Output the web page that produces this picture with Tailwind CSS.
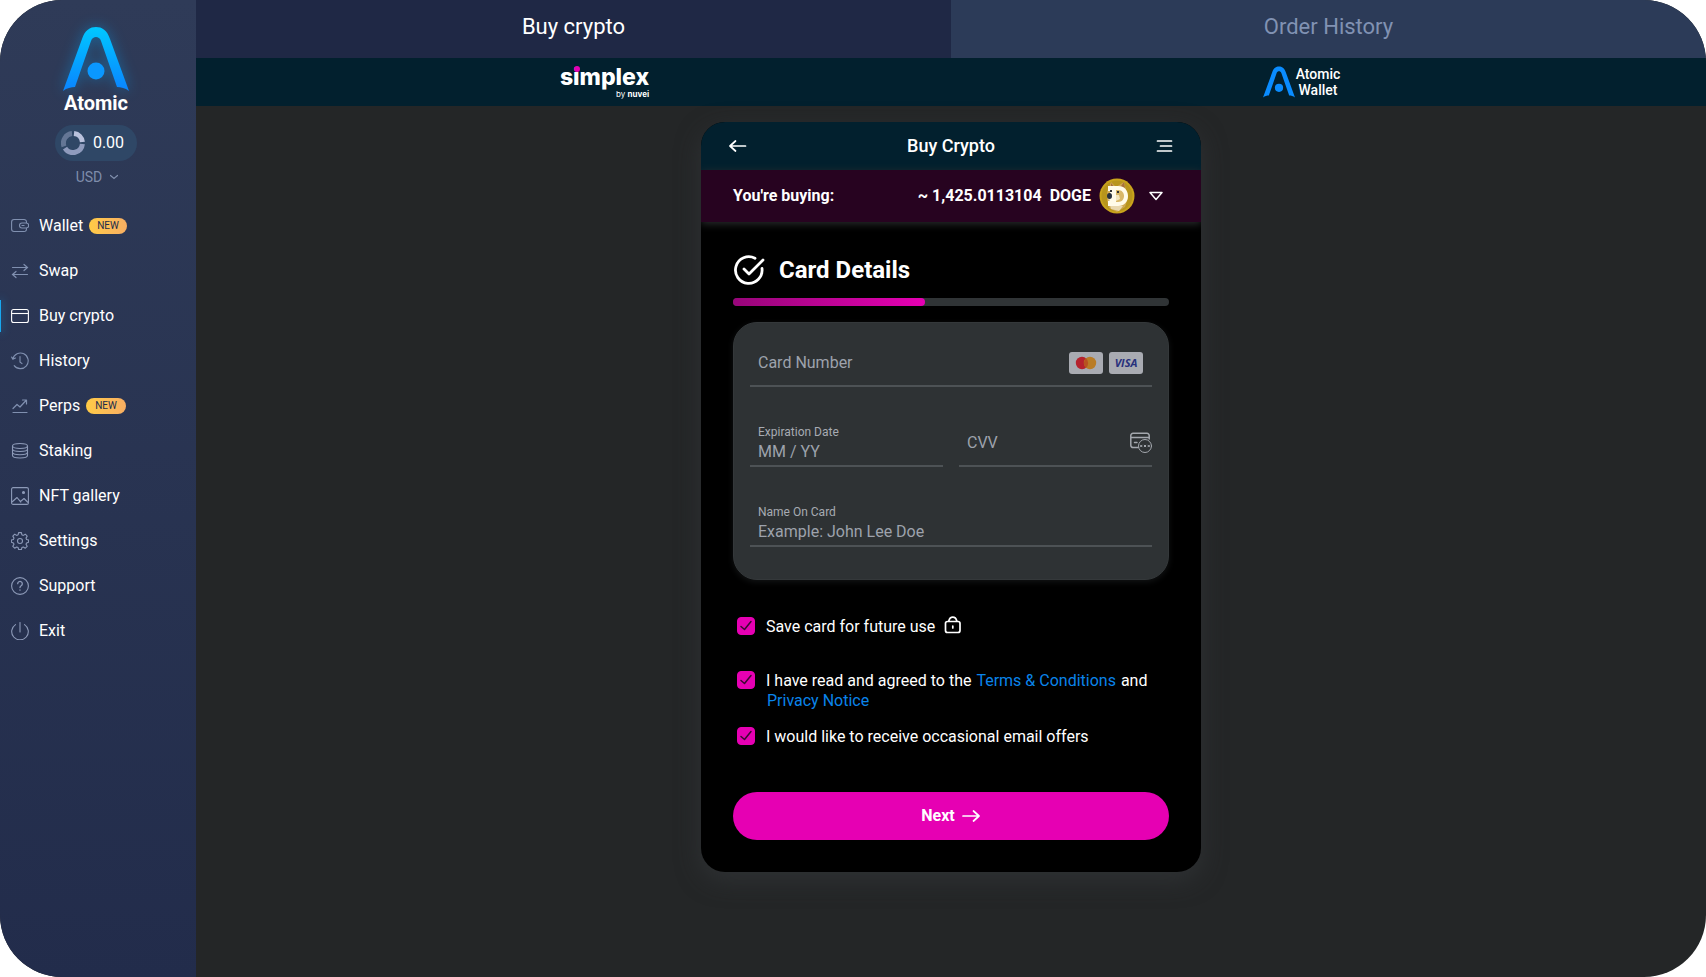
<!DOCTYPE html>
<html lang="en">
<head>
<meta charset="utf-8">
<meta name="viewport" content="width=device-width, initial-scale=1">
<title>Atomic Wallet – Buy crypto</title>
<script src="https://cdn.jsdelivr.net/npm/@tailwindcss/browser@4"></script>
</head>
<body class="bg-white font-[Roboto,sans-serif] text-base text-white">
<div class="flex min-h-screen overflow-hidden rounded-[62px] bg-[#242627]">

  <aside class="flex w-[196px] shrink-0 flex-col bg-linear-to-b from-[#2f3b58] to-[#222c4b]">
    <div class="flex flex-col items-center pt-[26px] pr-1">
      <svg class="h-[66px] w-[66px] overflow-visible drop-shadow-[0_0_7px_#00a8ff66]" viewBox="0 0 66 66" aria-hidden="true">
        <defs><linearGradient id="brand" x1="0" y1="0" x2="0" y2="1"><stop offset="0" stop-color="#00c8ff"/><stop offset="1" stop-color="#0a84ff"/></linearGradient></defs>
        <path fill="url(#brand)" d="M0 65 19 13C22 4 27 1 33 1S44 4 47 13L66 65C62 62 58 61 54 61L38 15C37 12 35 11 33 11S29 12 28 15L12 61C8 61 4 62 0 65Z"/>
        <circle cx="33" cy="45" r="8.5" fill="#0a98ff"/>
      </svg>
      <p class="text-xl leading-[22px] font-bold">Atomic</p>
      <div class="mt-[11px] flex h-9 items-center gap-2 rounded-full bg-[#2f4766] pr-[13px] pl-[6px]">
        <svg class="size-6" viewBox="0 0 24 24" fill="none" stroke-width="5" aria-hidden="true">
          <path stroke="#b9c1dc" d="M13 2.6A9.5 9.5 0 0 1 21.4 11"/>
          <path stroke="#8f9bbd" d="M21.4 13A9.5 9.5 0 0 1 4 17.2"/>
          <path stroke="#647695" d="M3 15.3A9.5 9.5 0 0 1 11 2.6"/>
        </svg>
        <span>0.00</span>
      </div>
      <button type="button" class="mt-[6px] flex h-5 items-center gap-2 pl-[2px] text-sm text-[#7f8dab]">USD
        <svg class="h-2 w-2" viewBox="0 0 8 8" fill="none" stroke="currentColor" stroke-width="1.2" stroke-linecap="round" aria-hidden="true"><path d="M.5 2.5 4 5.5 7.5 2.5"/></svg>
      </button>
    </div>

    <nav class="mt-4 flex flex-col">
      <a href="#" class="flex h-[45px] items-center gap-[10px] pl-[11px]">
        <svg class="size-[18px] text-[#8090b0]" viewBox="0 0 18 18" fill="none" stroke="currentColor" stroke-width="1.1" aria-hidden="true"><path d="M15.500 6V5A2.500 2.500 0 0 0 13 2.500H3A2.500 2.500 0 0 0 .6 5v7A2.500 2.500 0 0 0 3 14.500h10a2.500 2.500 0 0 0 2.500-2.500v-1M11 6h4.500l2 1v3l-2 1H11a2.500 2.500 0 0 1 0-5ZM10.500 8.500h3"/></svg>
        Wallet <span class="-ml-1 rounded-full bg-linear-to-r from-[#ffcb45] to-[#f8ae62] px-2 text-[10px] leading-4 text-[#222c4b]">NEW</span>
      </a>
      <a href="#" class="flex h-[45px] items-center gap-[10px] pl-[11px]">
        <svg class="size-[18px] text-[#8090b0]" viewBox="0 0 18 18" fill="none" stroke="currentColor" stroke-width="1.2" stroke-linecap="round" aria-hidden="true"><path d="M1.500 5.500h15M13 2.500l3.500 3L13 8.500M16.500 12.500h-15M5 9.500l-3.500 3L5 15.500"/></svg>
        Swap
      </a>
      <a href="#" aria-current="page" class="flex h-[45px] items-center gap-[10px]">
        <span class="h-8 w-px bg-[#18a8f0] shadow-[0_0_8px_1px_#18a8f066]"></span>
        <svg class="size-[18px]" viewBox="0 0 18 18" fill="none" stroke="currentColor" stroke-width="1.1" aria-hidden="true"><rect x=".6" y="2.500" width="16.800" height="13" rx="2"/><path d="M.5 6.500h17"/></svg>
        Buy crypto
      </a>
      <a href="#" class="flex h-[45px] items-center gap-[10px] pl-[11px]">
        <svg class="size-[18px] text-[#8090b0]" viewBox="0 0 18 18" fill="none" stroke="currentColor" stroke-width="1.1" stroke-linecap="round" stroke-linejoin="round" aria-hidden="true"><path d="M1.800 7A7.800 7.800 0 1 1 3.200 13.600M.6 5 1.800 7.300 4.500 6M9 4.500V10l2 1.700"/></svg>
        History
      </a>
      <a href="#" class="flex h-[45px] items-center gap-[10px] pl-[11px]">
        <svg class="size-[18px] text-[#8090b0]" viewBox="0 0 18 18" fill="none" stroke="currentColor" stroke-width="1.2" stroke-linecap="round" stroke-linejoin="round" aria-hidden="true"><path d="M2 15.500h14M2 11.500l4-4 3 2.500 6-6.500M11.500 3h4v4"/></svg>
        Perps <span class="-ml-1 rounded-full bg-linear-to-r from-[#ffcb45] to-[#f8ae62] px-[9px] text-[10px] leading-4 text-[#222c4b]">NEW</span>
      </a>
      <a href="#" class="flex h-[45px] items-center gap-[10px] pl-[11px]">
        <svg class="size-[18px] text-[#8d9ab8]" viewBox="0 0 18 18" fill="none" stroke="currentColor" stroke-width="1.1" aria-hidden="true"><ellipse cx="9" cy="4" rx="7.500" ry="2.500"/><path d="M1.500 4v9.500c0 1.400 3.400 2.500 7.500 2.500s7.500-1.100 7.500-2.500V4M1.500 7c0 1.400 3.400 2.500 7.500 2.500s7.500-1.100 7.500-2.500M1.500 10.300c0 1.400 3.400 2.500 7.500 2.500s7.500-1.100 7.500-2.500"/></svg>
        Staking
      </a>
      <a href="#" class="flex h-[45px] items-center gap-[10px] pl-[11px]">
        <svg class="size-[18px] text-[#8d9ab8]" viewBox="0 0 18 18" fill="none" stroke="currentColor" stroke-width="1.100" stroke-linejoin="round" aria-hidden="true"><rect x=".6" y=".6" width="16.800" height="16.800" rx="1.500"/><path d="M1 15l5-4.500 3.500 4 3.500-3 4 4M6 10.500l4 5"/><circle cx="12.500" cy="5.500" r="1" fill="currentColor"/></svg>
        NFT gallery
      </a>
      <a href="#" class="flex h-[45px] items-center gap-[10px] pl-[11px]">
        <svg class="size-[18px] text-[#8d9ab8]" viewBox="0 0 18 18" fill="none" stroke="currentColor" stroke-width="1.100" stroke-linejoin="round" aria-hidden="true"><circle cx="9" cy="9" r="2.500"/><path d="M7.600.6h2.800l.5 2.200 1.400.6 2-1.200 1.900 1.900-1.200 2 .6 1.400 2 .5v2.200l-2 .7-.6 1.400 1.200 2-1.900 1.900-2-1.200-1.400.6-.5 1.900H7.600l-.5-1.900-1.400-.6-2 1.200-1.900-1.900 1.200-2-.6-1.400-2-.7V8l2-.5L3 6.100l-1.200-2 1.900-1.900 2 1.200 1.400-.6Z"/></svg>
        Settings
      </a>
      <a href="#" class="flex h-[45px] items-center gap-[10px] pl-[11px]">
        <svg class="size-[18px] text-[#8d9ab8]" viewBox="0 0 18 18" fill="none" stroke="currentColor" stroke-width="1.100" stroke-linecap="round" aria-hidden="true"><circle cx="9" cy="9" r="8.400"/><path stroke-width="1.300" d="M6.700 6.700a2.300 2.300 0 1 1 3.500 2c-.8.500-1.200.9-1.200 1.900M9 12.900v.3"/></svg>
        Support
      </a>
      <a href="#" class="flex h-[45px] items-center gap-[10px] pl-[11px]">
        <svg class="size-[18px] text-[#8d9ab8]" viewBox="0 0 18 18" fill="none" stroke="currentColor" stroke-width="1.100" stroke-linecap="round" aria-hidden="true"><path d="M9 .5V10M4.500 2.600a8.300 8.300 0 1 0 9 0"/></svg>
        Exit
      </a>
    </nav>
  </aside>

  <div class="flex min-w-0 flex-1 flex-col">
    <div class="grid h-[58px] grid-cols-2 text-[22px]">
      <button type="button" class="bg-[#1f2845] pb-[6px]">Buy crypto</button>
      <button type="button" class="bg-[#2c3b58] pb-[6px] text-[#8192b3]">Order History</button>
    </div>

    <div class="grid h-12 grid-cols-2 items-center justify-items-center bg-[#02202e] pr-14 pl-[60px]">
      <div class="relative flex flex-col items-end font-[Inter,sans-serif]">
        <span class="text-[23px] leading-6 font-extrabold">simplex</span>
        <span class="absolute top-px left-[14px] size-[6px] rounded-full bg-[#e600b3]"></span>
        <span class="-mt-px text-[8px] leading-3">by <b>nuvei</b></span>
      </div>
      <div class="flex items-center gap-px">
        <svg class="h-8 w-8" viewBox="0 0 66 66" fill="#0a8cff" aria-hidden="true"><path d="M0 65 19 13C22 4 27 1 33 1S44 4 47 13L66 65C62 62 58 61 54 61L38 15C37 12 35 11 33 11S29 12 28 15L12 61C8 61 4 62 0 65Z"/><circle cx="33" cy="45" r="8.500"/></svg>
        <p class="text-center text-sm leading-4 font-medium">Atomic<br>Wallet</p>
      </div>
    </div>

    <main class="flex flex-1 justify-center px-4 pt-4 pb-8">
      <section class="w-full max-w-[500px] self-start overflow-hidden rounded-3xl bg-black shadow-[0_8px_24px_#34383aaa]">
        <header class="flex h-12 items-center justify-between bg-[#02202e] px-[26px]">
          <button type="button" aria-label="Back">
            <svg class="h-4 w-5" viewBox="0 0 20 16" fill="none" stroke="currentColor" stroke-width="1.700" stroke-linecap="round" stroke-linejoin="round"><path d="M18.500 8H3M8.500 3 3 8l5.500 5"/></svg>
          </button>
          <h1 class="text-lg font-medium">Buy Crypto</h1>
          <button type="button" aria-label="Menu">
            <svg class="h-4 w-5" viewBox="0 0 20 16" fill="none" stroke="currentColor" stroke-width="1.700" stroke-linecap="round"><path d="M2.500 3h14M5.500 8h11M2.500 13h14"/></svg>
          </button>
        </header>

        <div class="flex h-[52px] items-center bg-[#270320] pr-[38px] pl-8 font-bold shadow-[0_2px_8px_#2a2d2e]">
          <span>You're buying:</span>
          <span class="ml-auto">~ 1,425.0113104</span>
          <span class="ml-2">DOGE</span>
          <svg class="ml-2 size-9" viewBox="0 0 36 36" aria-hidden="true">
            <circle cx="18" cy="18" r="17.500" fill="#c9a41c"/>
            <circle cx="18" cy="18" r="15.500" fill="#b8951c"/>
            <path fill="#cfa850" d="M8 14 12 4l5 5 8-5 2 8 2 8-3 9-8 5-8-4-2-8Z"/>
            <path fill="#a8703a" d="m12 5 4 5-4 2ZM25 4l1 6-4-2Z"/>
            <path fill="#e9d8ae" d="m9 20 5-3 3 10 7 1-4 5-8-2Z"/>
            <path fill="#fffbe8" d="M9 8h10c6 0 10 4 10 10s-4 10-10 10H9v-5h2v-10H9Z"/>
            <path fill="#d9b868" d="M17 12h2c4 0 6 3 6 6s-2 6-6 6h-2Z"/>
            <path fill="#f3e6bd" d="M17 17h3l1 4-4 2Z"/>
            <ellipse cx="10.500" cy="18" rx="2.500" ry="3" fill="#27303c"/>
            <path fill="#333" d="M11 12h2v2h-2ZM18 13h2v2h-2Z"/>
          </svg>
          <button type="button" aria-label="Show order summary" class="ml-[14px]">
            <svg class="h-3 w-[14px]" viewBox="0 0 14 12" fill="none" stroke="currentColor" stroke-width="1.500" stroke-linejoin="round"><path d="M1 2.500h12L7 9.500Z"/></svg>
          </button>
        </div>

        <form class="flex flex-col px-8 pt-8 pb-8">
          <div class="flex h-8 items-center gap-[14px]">
            <svg class="size-8" viewBox="0 0 32 32" fill="none" stroke="currentColor" stroke-width="2.800" stroke-linecap="round" stroke-linejoin="round" aria-hidden="true"><path d="M22 4.300A13.300 13.300 0 1 0 29 14.500"/><path d="m11 15 5 5L30 6"/></svg>
            <h2 class="text-2xl font-bold">Card Details</h2>
          </div>
          <div role="progressbar" aria-label="Order progress" aria-valuenow="44" aria-valuemin="0" aria-valuemax="100" class="mt-3 h-2 rounded-full bg-[#303436]">
            <div class="h-2 rounded-full bg-linear-to-r from-[#98057a] to-[#e600b3]" style="width:44%"></div>
          </div>

          <div class="mt-4 grid grid-cols-2 gap-x-4 gap-y-6 rounded-3xl border border-[#34383a] bg-[#2e3234] px-4 pt-2 pb-8 shadow-[0_2px_6px_#2e323466]">
            <div class="col-span-2 flex h-14 items-end border-b-2 border-[#4d5255]">
              <input aria-label="Card Number" placeholder="Card Number" inputmode="numeric" class="h-[46px] min-w-0 flex-1 px-2 outline-none placeholder:text-[#9da2ac]">
              <div class="flex h-11 items-center gap-[6px] pr-[9px]">
                <svg class="h-[22px] w-[34px]" viewBox="0 0 34 22" role="img" aria-label="Mastercard"><rect width="34" height="22" rx="3" fill="#a9abb2"/><circle cx="13" cy="11" r="6.200" fill="#b5222d"/><circle cx="21" cy="11" r="6.200" fill="#b97c26"/><path fill="#b8521f" d="M17 6.300a6.200 6.200 0 0 1 0 9.400 6.200 6.200 0 0 1 0-9.400Z"/></svg>
                <span class="flex h-[22px] w-[34px] items-center justify-center rounded-[3px] bg-[#a9abb2] font-[Open_Sans,sans-serif] text-[11px] font-bold text-[#27307c] italic">VISA</span>
              </div>
            </div>
            <div class="flex h-14 flex-col justify-end border-b-2 border-[#4d5255] px-2">
              <label for="expiry" class="text-xs leading-[10px] text-[#a7abb2]">Expiration Date</label>
              <input id="expiry" placeholder="MM / YY" class="h-7 w-full outline-none placeholder:text-[#9da2ac]">
            </div>
            <div class="flex h-14 items-end border-b-2 border-[#4d5255]">
              <input aria-label="CVV" placeholder="CVV" inputmode="numeric" class="h-[46px] min-w-0 flex-1 px-2 outline-none placeholder:text-[#9da2ac]">
              <div class="flex h-11 items-center">
                <svg class="h-[22px] w-[22px]" viewBox="0 0 22 22" fill="none" stroke="#a4a8ae" stroke-width="1.500" stroke-linecap="round" aria-hidden="true"><path d="M8 15.500H3a2.200 2.200 0 0 1-2.200-2.200V3.500A2.200 2.200 0 0 1 3 1.300h14a2.200 2.200 0 0 1 2.200 2.200V7M1 5.500h18M4.500 10.500h2.500"/><circle cx="15" cy="14" r="6.500" stroke-width="1"/><path stroke-width="1" d="m10.500 13.200 1.500 1.600m0-1.600-1.500 1.600m3.700-1.600 1.600 1.600m0-1.600-1.600 1.600m3.800-1.600 1.500 1.600m0-1.600-1.500 1.600"/></svg>
              </div>
            </div>
            <div class="col-span-2 flex h-14 flex-col justify-end border-b-2 border-[#4d5255] px-2">
              <label for="holder" class="text-xs leading-[10px] text-[#a7abb2]">Name On Card</label>
              <input id="holder" placeholder="Example: John Lee Doe" class="h-7 w-full outline-none placeholder:text-[#9da2ac]">
            </div>
          </div>

          <div class="mt-[37px] flex gap-[11px] px-1 leading-5">
            <div class="relative size-[18px] shrink-0">
              <input id="save" type="checkbox" checked class="peer block size-[18px] appearance-none rounded-sm border border-[#e600b3] checked:bg-[#e600b3]">
              <svg class="pointer-events-none absolute inset-0 hidden size-[18px] peer-checked:block" viewBox="0 0 18 18" fill="none" stroke="#3a0830" stroke-width="1.500" stroke-linecap="round" stroke-linejoin="round" aria-hidden="true"><path d="m4 9.500 3.500 3 6.500-8"/></svg>
            </div>
            <label for="save">Save card for future use</label>
            <svg class="-mt-px -ml-[2px] h-[18px] w-[18px]" viewBox="0 0 18 18" fill="none" stroke="currentColor" stroke-width="1.700" stroke-linecap="round" aria-hidden="true"><rect x="1.500" y="5.500" width="14.500" height="11" rx="2"/><path d="M4.800 5C5.500 2.300 7 1.200 8.800 1.200s3.300 1.100 4 3.800M8.800 10v2"/></svg>
          </div>
          <div class="mt-[34px] flex gap-[11px] px-1 leading-5">
            <div class="relative size-[18px] shrink-0">
              <input id="terms" type="checkbox" checked class="peer block size-[18px] appearance-none rounded-sm border border-[#e600b3] checked:bg-[#e600b3]">
              <svg class="pointer-events-none absolute inset-0 hidden size-[18px] peer-checked:block" viewBox="0 0 18 18" fill="none" stroke="#3a0830" stroke-width="1.500" stroke-linecap="round" stroke-linejoin="round" aria-hidden="true"><path d="m4 9.500 3.500 3 6.500-8"/></svg>
            </div>
            <label for="terms">I have read and agreed to the <a href="#" class="mx-px text-[#0a84ea]">Terms &amp; Conditions</a> and <a href="#" class="mx-px text-[#0a84ea]">Privacy Notice</a></label>
          </div>
          <div class="mt-4 flex gap-[11px] px-1 leading-5">
            <div class="relative size-[18px] shrink-0">
              <input id="offers" type="checkbox" checked class="peer block size-[18px] appearance-none rounded-sm border border-[#e600b3] checked:bg-[#e600b3]">
              <svg class="pointer-events-none absolute inset-0 hidden size-[18px] peer-checked:block" viewBox="0 0 18 18" fill="none" stroke="#3a0830" stroke-width="1.500" stroke-linecap="round" stroke-linejoin="round" aria-hidden="true"><path d="m4 9.500 3.500 3 6.500-8"/></svg>
            </div>
            <label for="offers">I would like to receive occasional email offers</label>
          </div>

          <button type="submit" class="mt-[45px] flex h-12 items-center justify-center gap-[6px] rounded-full bg-[#e600b3] font-bold">Next
            <svg class="h-4 w-5" viewBox="0 0 20 16" fill="none" stroke="currentColor" stroke-width="1.700" stroke-linecap="round" stroke-linejoin="round" aria-hidden="true"><path d="M2 8h16M12.500 3 18 8l-5.500 5"/></svg>
          </button>
        </form>
      </section>
    </main>
  </div>
</div>
</body>
</html>
